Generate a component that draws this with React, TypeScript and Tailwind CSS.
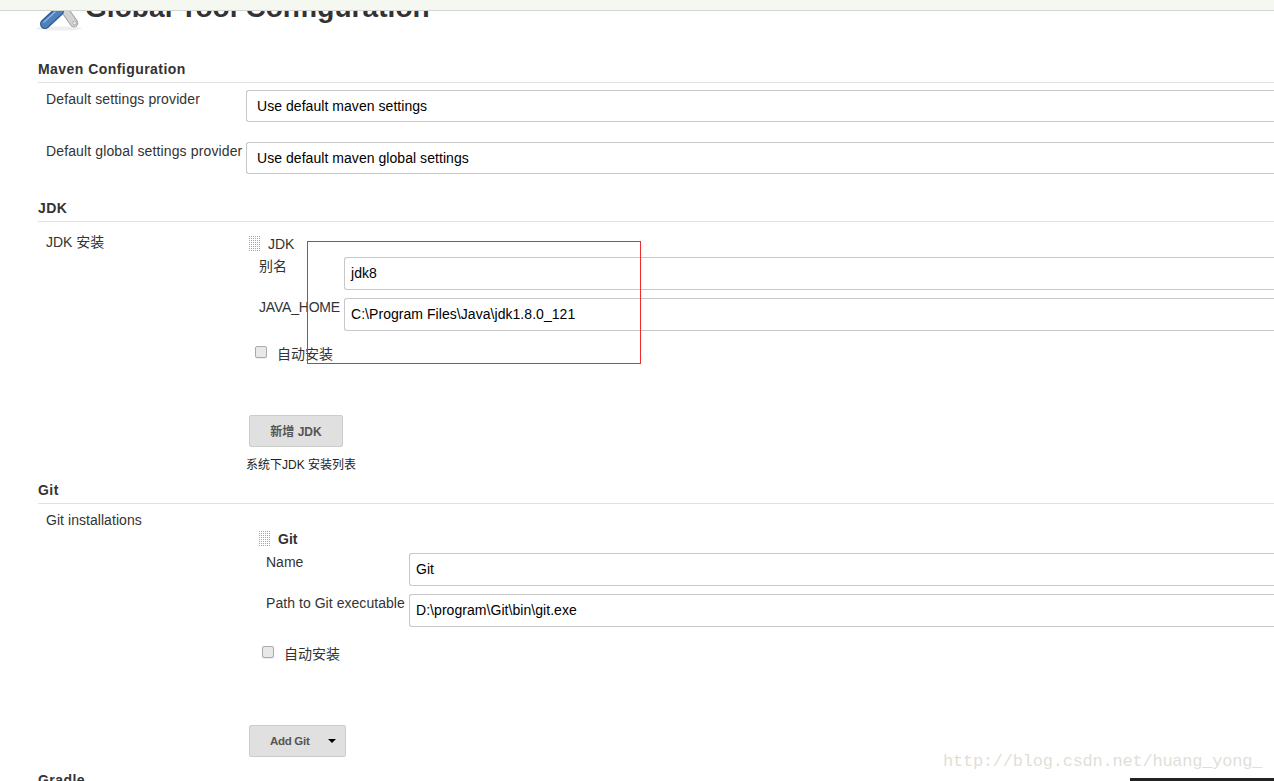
function SectionHeader({ title }: { title: string }) {
  return (
    <div className="ml-[38px] h-[17px] border-b border-[#e0e0e0] box-content pb-[4px]">
      <h2 className="text-[14px] leading-[17px] font-bold text-[#333] tracking-[0.45px]">{title}</h2>
    </div>
  );
}

function TextBox({ value, className }: { value: string; className: string }) {
  return (
    <div className={`flex items-center rounded-l-[3px] border border-r-0 border-[#c8c8c8] bg-white text-[14px] tracking-[0.05px] text-black ${className}`}>
      {value}
    </div>
  );
}

function DragHandle() {
  return (
    <svg width="12" height="16" className="shrink-0">
      <pattern id="grip" width="2" height="2" patternUnits="userSpaceOnUse">
        <rect width="1" height="1" fill="#a6a6a6" />
      </pattern>
      <rect width="12" height="16" fill="url(#grip)" />
    </svg>
  );
}

function Check({ label }: { label: string }) {
  return (
    <div className="flex items-start">
      <div className="h-[12px] w-[12px] rounded-[2px] border border-[#aaa] bg-[#e8e8e8] shadow-[0_1px_1px_#eee]" />
      <span className="ml-[10px] text-[14px] leading-[16px] text-[#333]">{label}</span>
    </div>
  );
}

function ToolIcon() {
  return (
    <svg width="46" height="34" viewBox="0 0 46 34" className="mb-[12px] shrink-0">
      <ellipse cx="23" cy="31.5" rx="23" ry="2" fill="#eeeeee" />
      <line x1="28" y1="12" x2="38" y2="26" stroke="#a0a2a0" strokeWidth="8.5" strokeLinecap="round" />
      <line x1="28" y1="12" x2="38" y2="26" stroke="#d2d4d2" strokeWidth="6.5" strokeLinecap="round" />
      <circle cx="38.5" cy="26" r="1.8" fill="#f0f0f0" stroke="#a5a5a5" strokeWidth="0.8" />
      <line x1="23" y1="14" x2="9" y2="27" stroke="#2c5a94" strokeWidth="10" strokeLinecap="round" />
      <line x1="23" y1="14" x2="9" y2="27" stroke="#4f81bd" strokeWidth="7.5" strokeLinecap="round" />
      <line x1="19" y1="15" x2="8" y2="25" stroke="#8db3e2" strokeWidth="1.5" strokeLinecap="round" />
    </svg>
  );
}

export default function App() {
  return (
    <div className="relative flex h-[781px] w-[1274px] flex-col overflow-hidden bg-white font-['Liberation_Sans','Noto_Sans_CJK_SC',sans-serif] text-[#333]">
      {/* top bar covers the heading */}
      <div className="relative z-10 h-[11px] shrink-0 border-b border-[#d5d5d0] bg-[#f5f8f1]" />

      <div className="mt-[-21px] flex h-[53px] shrink-0 items-end pl-[36px]">
        <ToolIcon />
        <h1 className="mb-[17px] ml-[3px] text-[28px] leading-[36px] font-bold text-[#333] tracking-[0.06px]">
          Global Tool Configuration
        </h1>
      </div>

      <div className="mt-[18px]">
        <SectionHeader title="Maven Configuration" />
      </div>

      <div className="mt-[7px] flex pl-[46px]">
        <div className="w-[200px] pt-px text-[14px] leading-[16px] tracking-[0.12px]">Default settings provider</div>
        <TextBox value="Use default maven settings" className="h-[32px] flex-1 pl-[10px]" />
      </div>
      <div className="mt-[20px] flex pl-[46px]">
        <div className="w-[200px] pt-px text-[14px] leading-[16px] tracking-[0.13px] whitespace-nowrap">Default global settings provider</div>
        <TextBox value="Use default maven global settings" className="h-[32px] flex-1 pl-[10px]" />
      </div>

      <div className="mt-[26px]">
        <SectionHeader title="JDK" />
      </div>

      <div className="mt-[14px] flex pl-[46px]">
        <div className="w-[203px] text-[14px] leading-[13px]">JDK 安装</div>
        <div className="flex-1">
          <div className="flex items-center">
            <DragHandle />
            <span className="ml-[7px] text-[14px] leading-[16px]">JDK</span>
          </div>
          <div className="mt-[5px] flex pl-[10px]">
            <div className="w-[85px] pt-px text-[14px] leading-[16px]">别名</div>
            <TextBox value="jdk8" className="h-[33px] flex-1 pl-[6px]" />
          </div>
          <div className="mt-[8px] flex pl-[10px]">
            <div className="w-[85px] pt-px text-[14px] leading-[16px] tracking-[-0.2px]">JAVA_HOME</div>
            <TextBox value="C:\Program Files\Java\jdk1.8.0_121" className="h-[33px] flex-1 pl-[6px]" />
          </div>
          <div className="mt-[15px] pl-[6px]">
            <Check label="自动安装" />
          </div>
          <button className="mt-[53px] flex h-[32px] w-[94px] items-center justify-center rounded-[2px] border border-[#ccc] bg-[#e0e0e0] pt-[2px] text-[12px] font-bold text-[#555]">
            新增 JDK
          </button>
        </div>
      </div>

      <div className="mt-[11px] pl-[246px] text-[12px] leading-[14px] text-[#222]">系统下JDK 安装列表</div>

      <div className="mt-[10px]">
        <SectionHeader title="Git" />
      </div>

      <div className="mt-[8px] flex pl-[46px]">
        <div className="w-[203px] text-[14px] leading-[16px] tracking-[0.05px]">Git installations</div>
        <div className="flex-1">
          <div className="mt-[19px] flex items-center pl-[10px]">
            <DragHandle />
            <span className="ml-[7px] text-[14px] leading-[16px] font-bold">Git</span>
          </div>
          <div className="mt-[6px] flex pl-[17px]">
            <div className="w-[143px] pt-px text-[14px] leading-[16px]">Name</div>
            <TextBox value="Git" className="h-[33px] flex-1 pl-[6px]" />
          </div>
          <div className="mt-[8px] flex pl-[17px]">
            <div className="w-[143px] pt-px text-[14px] leading-[16px] tracking-[0.05px] whitespace-nowrap">Path to Git executable</div>
            <TextBox value="D:\program\Git\bin\git.exe" className="h-[33px] flex-1 pl-[6px]" />
          </div>
          <div className="mt-[19px] pl-[13px]">
            <Check label="自动安装" />
          </div>
          <button className="mt-[63px] flex h-[32px] w-[97px] items-center rounded-[2px] border border-[#ccc] bg-[#e0e0e0] pl-[20px] text-[11.5px] font-bold tracking-[-0.3px] text-[#555]">
            <span className="pt-[2px]">Add Git</span>
            <span className="ml-[19px] h-0 w-0 border-x-[4px] border-t-[4px] border-x-transparent border-t-black" />
          </button>
        </div>
      </div>

      <div className="mt-[15px] ml-[38px]">
        <h2 className="text-[14px] leading-[17px] font-bold text-[#333] tracking-[0.45px]">Gradle</h2>
      </div>

      {/* annotation and blog watermark sit over the page */}
      <div className="absolute top-[241px] left-[307px] h-[123px] w-[334px] border border-[#ee2a2a]" />
      <div className="absolute top-[751px] left-[943px] font-['Liberation_Mono',monospace] text-[17px] leading-[22px] tracking-[-0.23px] text-[#dfdfd8] whitespace-nowrap">
        http://blog.csdn.net/huang_yong_
      </div>
      <div className="absolute right-0 bottom-0 h-[3px] w-[144px] bg-[#222]" />
    </div>
  );
}
